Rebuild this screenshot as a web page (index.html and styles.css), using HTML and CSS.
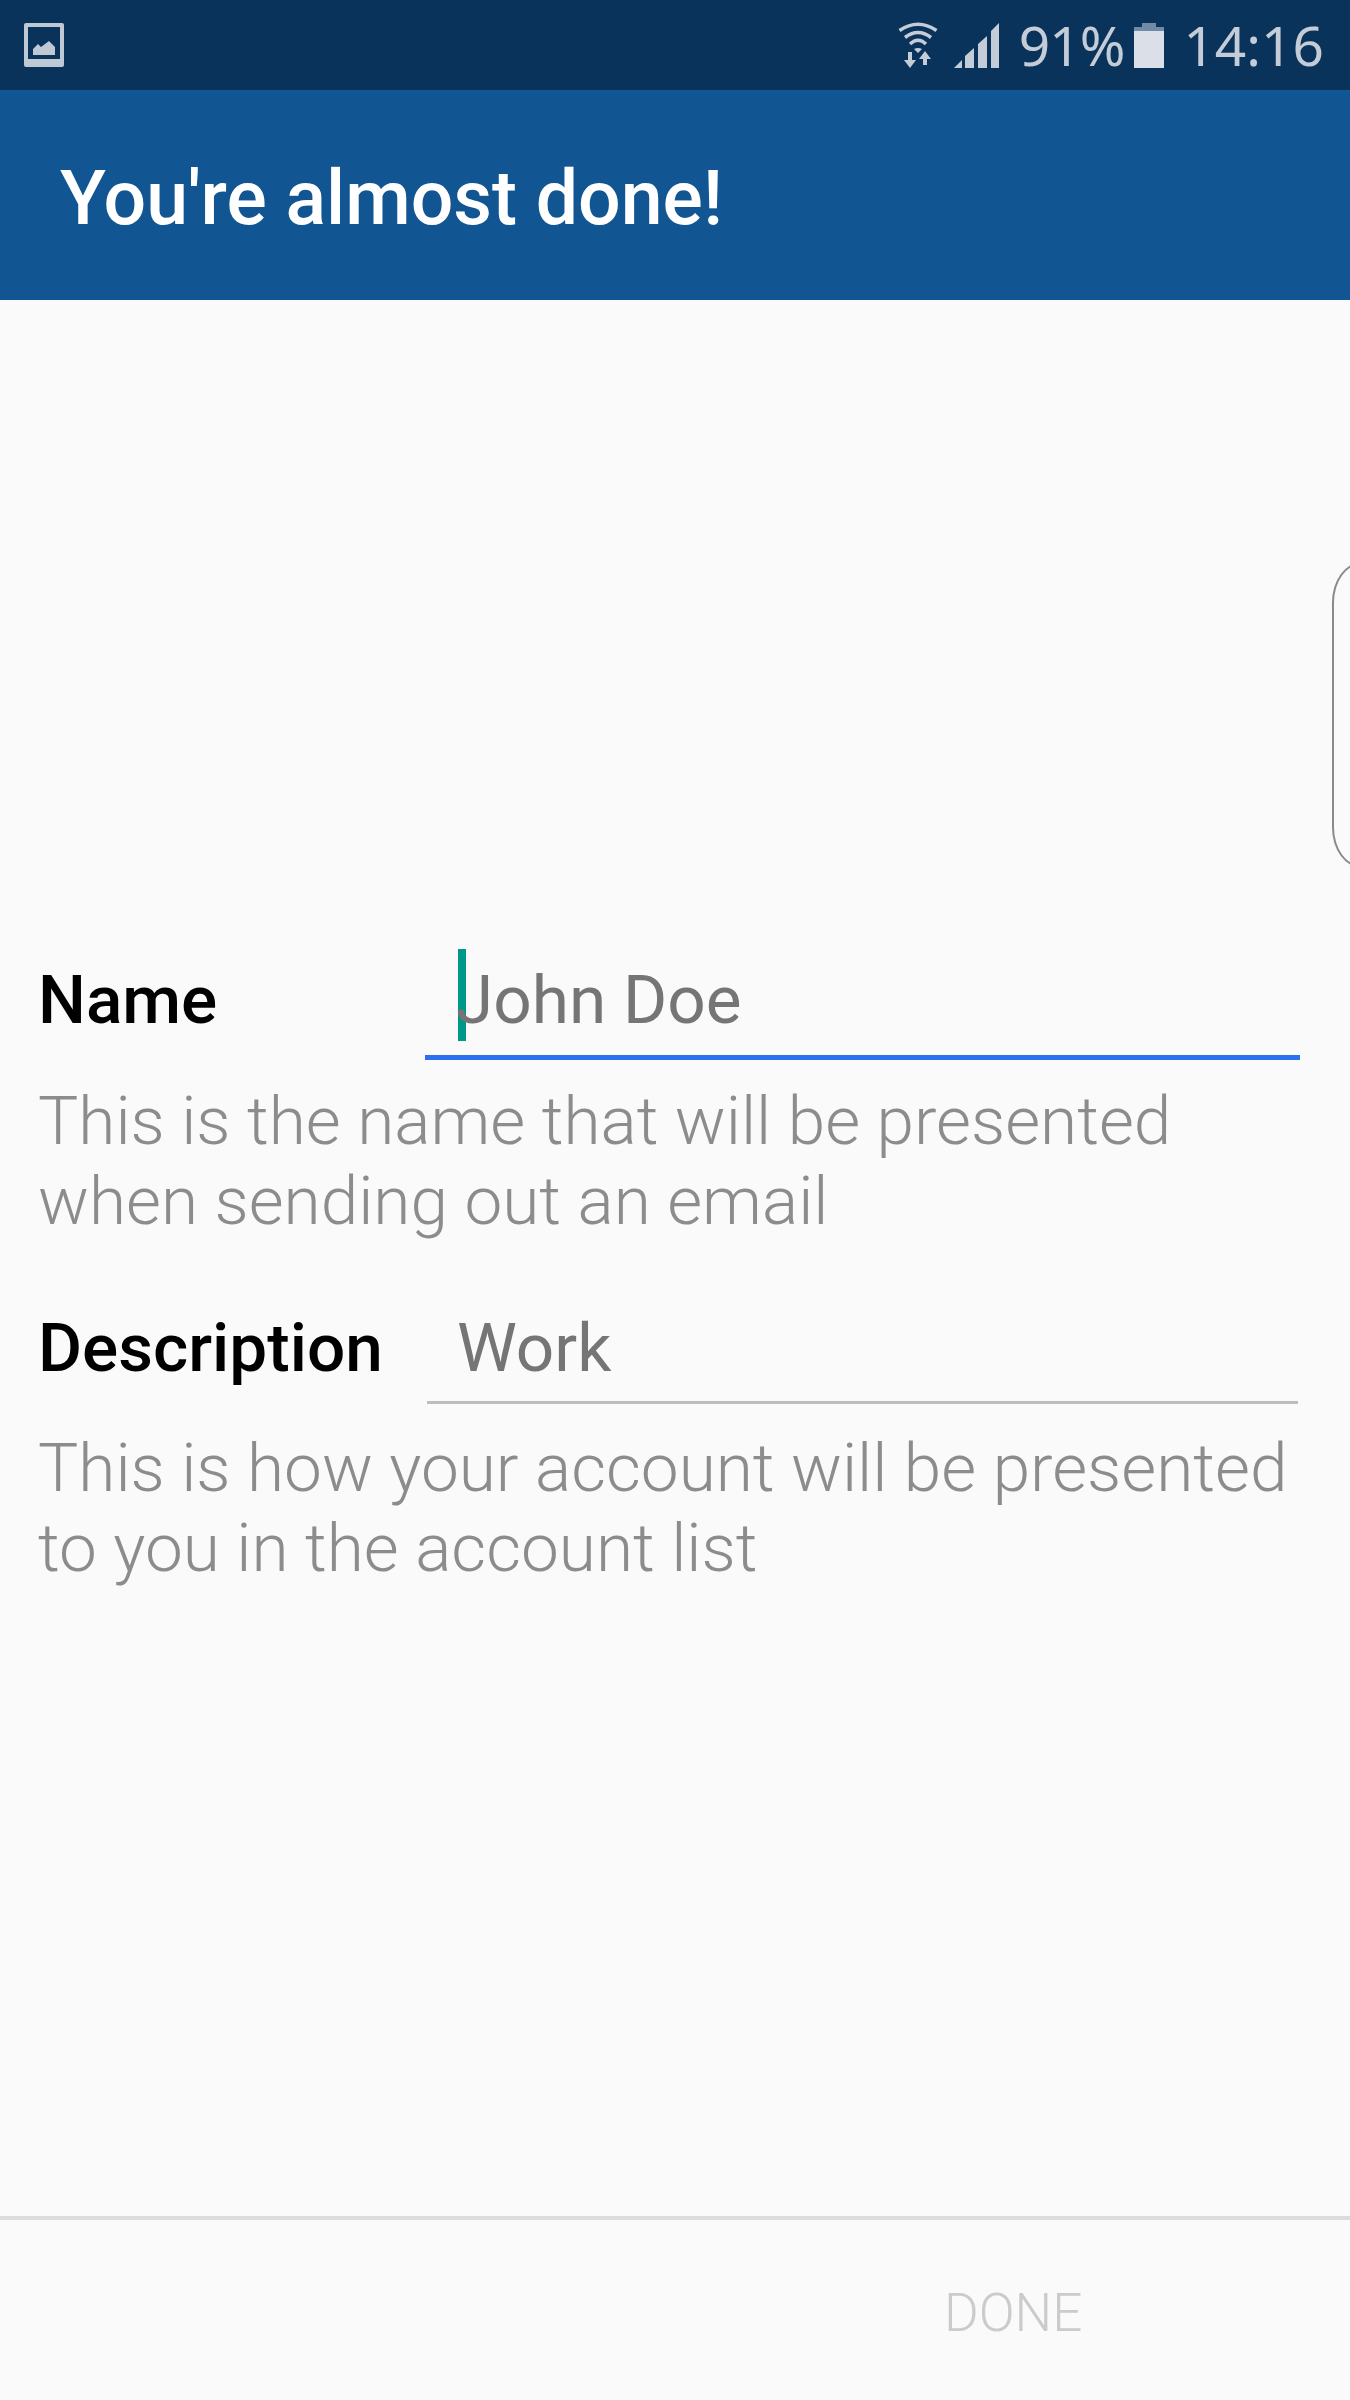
FILE: index.html
```html
<!DOCTYPE html>
<html lang="en">
<head>
<meta charset="utf-8">
<title>You're almost done!</title>
<link rel="stylesheet" href="styles.css">
</head>
<body>
<div class="screen">
  <header class="status">
    <svg class="pic" viewBox="0 0 40 44" width="40" height="44"><path fill="#bfc9d5" fill-rule="evenodd" d="M2 0h36a2 2 0 0 1 2 2v40a2 2 0 0 1-2 2H2a2 2 0 0 1-2-2V2a2 2 0 0 1 2-2zM4 4v32h32V4z"/><path fill="#bfc9d5" d="M9 32V26l5-5 3 3 8-6 6 6v8z"/></svg>
    <div class="status-right">
      <svg class="wifi" viewBox="0 0 40 46" width="40" height="46"><g fill="none" stroke="#c3ccd7" stroke-width="3.500"><path d="M1.500 8.500Q20-4 38.500 8.500"/><path d="M7 15.500Q20 5.500 33 15.500"/><path d="M12 22Q20 14.500 28 22"/></g><path fill="#c3ccd7" d="M16 27q4-2 8 0l-4 4zM10 30h4v8h4l-6 8-6-8h4zM27 29l6 8h-4v6h-4v-6h-4z"/></svg>
      <svg class="signal" viewBox="0 0 45 45" width="45" height="45"><path fill="#c3ccd7" d="M0 45l8-8v8zM11 33l9-8v20h-9zM24 21l9-8v32h-9zM37 8l8-8v45h-8z"/></svg>
      <span class="pct">91%</span>
      <svg class="batt" viewBox="0 0 30 45" width="30" height="45"><path fill="#6f8ba6" d="M8 0h14v4h8v4H0V4h8z"/><path fill="#dbe0e8" d="M0 8h30v37H0z"/></svg>
      <span class="time">14:16</span>
    </div>
  </header>
  <div class="appbar"><h1 class="title">You're almost done!</h1></div>
  <main class="form">
    <section class="group group-name">
      <div class="row">
        <label class="label">Name</label>
        <div class="field active"><span class="cursor"></span><span class="value">John Doe</span></div>
      </div>
      <p class="hint">This is the name that will be presented<br>when sending out an email</p>
    </section>
    <section class="group group-desc">
      <div class="row">
        <label class="label">Description</label>
        <div class="field"><span class="value">Work</span></div>
      </div>
      <p class="hint">This is how your account will be presented<br>to you in the account list</p>
    </section>
  </main>
  <footer class="footer"><span class="done">DONE</span></footer>
  <div class="edge"></div>
</div>
</body>
</html>
```
FILE: styles.css
```css
* { box-sizing: border-box; }
html, body { margin: 0; padding: 0; }
body { background: #fafafa; font-family: Roboto, "Liberation Sans", sans-serif; }
.screen { position: relative; width: 1350px; height: 2400px; display: flex; flex-direction: column; background: #fafafa; overflow: hidden; }
.status { height: 90px; flex: none; background: #09335a; display: flex; align-items: center; justify-content: space-between; padding: 0 26px 0 24px; color: #c3ccd7; }
.pic { display: block; }
.status-right { display: flex; align-items: center; }
.wifi { margin-right: 16px; }
.signal { margin-right: 20px; }
.pct, .time { font-family: "Noto Sans", "Open Sans", sans-serif; font-size: 55px; line-height: 90px; }
.pct { margin-right: 10px; letter-spacing: -1px; }
.batt { margin-right: 19px; }
.appbar { height: 210px; flex: none; background: #115592; display: flex; align-items: center; padding: 8px 0 0 60px; }
.title { margin: 0; color: #fff; font-size: 75.200px; font-weight: 500; line-height: 1; }
.form { flex: 1; padding: 648px 52px 0 38px; }
.row { display: flex; align-items: stretch; height: 112px; }
.group-name { margin-bottom: 53px; }
.group-desc .row { height: 110px; }
.label { width: 389px; flex: none; color: #000; font-size: 67.500px; font-weight: 500; line-height: 107px; }
.group-name .label, .group-name .field { line-height: 104px; }
.field { position: relative; flex: 1; padding-left: 30px; border-bottom: 3px solid #bdbdbd; color: #757575; font-size: 67.500px; line-height: 107px; }
.field.active { margin: 0 -2px; padding-left: 31px; border-bottom: 5px solid #2c6fef; }
.value { position: relative; }
.cursor { position: absolute; left: 33px; top: 1px; width: 8px; height: 92px; background: #009688; }
.hint { margin: 21px 0 0; color: #8c8c8c; font-size: 67.500px; font-weight: 300; line-height: 80px; }
.group-desc .hint { margin-top: 24px; }
.footer { height: 184px; flex: none; border-top: 4px solid #dcdcdc; display: flex; align-items: center; padding: 6px 0 0 944px; }
.done { color: #cbcbcb; font-size: 53px; font-weight: 300; }
.edge { position: absolute; right: -42px; top: 562px; width: 60px; height: 306px; border: 2px solid #8a8a8a; border-radius: 34px / 46px; }
```
